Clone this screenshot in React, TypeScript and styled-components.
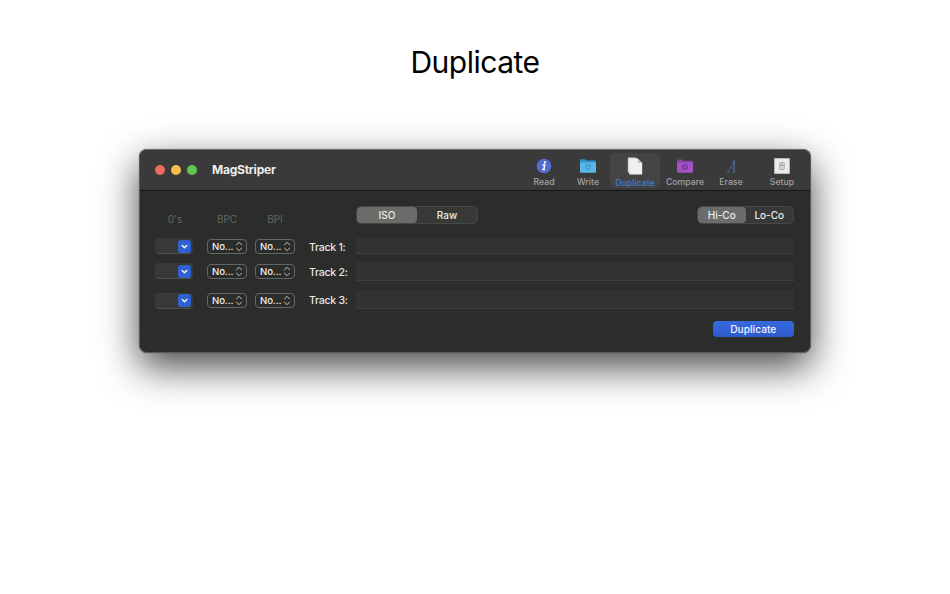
import React from "react";
import styled, { createGlobalStyle } from "styled-components";

const GlobalStyle = createGlobalStyle`
  * { box-sizing: border-box; }
  body { margin: 0; background: #fff; font-family: Inter, "Liberation Sans", sans-serif; }
`;

const Page = styled.main`
  height: 594px;
  overflow: hidden;
  display: flex;
  flex-direction: column;
  align-items: center;
`;

const Heading = styled.h1`
  margin: 42px 0 67px;
  height: 40px;
  line-height: 40px;
  font-size: 30px;
  font-weight: 400;
  letter-spacing: -0.5px;
  color: #000;
`;

const Window = styled.section`
  width: 672px;
  height: 204px;
  border: 1px solid #5b5b5b;
  border-top-color: #6c6c6c;
  border-radius: 8px;
  overflow: hidden;
  background: #2b2d2a;
  box-shadow: 0 0 1px rgba(0, 0, 0, 0.6), 0 14px 38px rgba(0, 0, 0, 0.72);
`;

const TitleBar = styled.header`
  height: 41px;
  padding: 0 7px 0 15.3px;
  display: flex;
  align-items: flex-start;
  background: #3a3a3a;
  border-bottom: 1px solid #161616;
`;

const Lights = styled.div`
  height: 40px;
  width: 56.7px;
  display: flex;
  align-items: center;
  gap: 6px;
`;

const Light = styled.span<{ $color: string }>`
  width: 10px;
  height: 10px;
  border-radius: 50%;
  background: ${(p) => p.$color};
`;

const Title = styled.div`
  flex: 1;
  line-height: 40px;
  font-size: 12px;
  font-weight: 700;
  letter-spacing: -0.22px;
  color: #ededed;
`;

const Tool = styled.button<{ $width: number; $active?: boolean; $gap?: number }>`
  width: ${(p) => p.$width}px;
  height: 35px;
  margin: 3px 0 0 ${(p) => p.$gap ?? 0}px;
  padding: 4px 0 0;
  border: 0;
  border-radius: 5px;
  display: flex;
  flex-direction: column;
  align-items: center;
  justify-content: flex-start;
  gap: 2px;
  font: 500 8.7px/12px Inter, sans-serif;
  letter-spacing: 0.02px;
  white-space: nowrap;
  background: ${(p) => (p.$active ? "#444444" : "transparent")};
  color: ${(p) => (p.$active ? "#3b7bdc" : "#a2a2a2")};
`;

const IconSlot = styled.span`
  height: 18px;
  display: flex;
  align-items: center;
  svg { display: block; }
`;

const Body = styled.div`
  padding: 15px 16px 0 15px;
`;

const HeadRow = styled.div`
  height: 32px;
  display: flex;
  align-items: flex-start;
`;

const ColumnLabel = styled.span<{ $width: number; $gap: number }>`
  width: ${(p) => p.$width}px;
  margin-right: ${(p) => p.$gap}px;
  padding-top: 7px;
  text-align: center;
  font-size: 10px;
  line-height: 13px;
  color: #656764;
`;

const Segmented = styled.div<{ $push?: boolean }>`
  height: 18px;
  display: flex;
  margin-left: ${(p) => (p.$push ? "auto" : "61px")};
  border: 1px solid #464845;
  border-radius: 5px;
  background: #373936;
`;

const Segment = styled.button<{ $width: number; $on?: boolean }>`
  width: ${(p) => p.$width}px;
  height: 16px;
  padding: 0;
  border: 0;
  border-radius: 4px;
  background: ${(p) => (p.$on ? "#6a6c69" : "transparent")};
  color: #ececec;
  font: 500 10px/16px Inter, sans-serif;
`;

const TrackRow = styled.div<{ $height: number }>`
  height: ${(p) => p.$height}px;
  display: flex;
  align-items: flex-start;
`;

const Combo = styled.div<{ $top: number }>`
  width: 38px;
  height: 16px;
  margin: ${(p) => p.$top}px 14px 0 0;
  padding: 0.5px 0.6px 0 0;
  display: flex;
  justify-content: flex-end;
  border: 1px solid #393b38;
  border-bottom-color: #4d4f4c;
  border-radius: 4px;
  background: #373936;
`;

const ComboButton = styled.span`
  width: 13px;
  height: 13px;
  border-radius: 3px;
  background: #2f62d0;
  svg { display: block; }
`;

const Popup = styled.button<{ $top: number; $gap: number }>`
  width: 40px;
  height: 15px;
  margin: ${(p) => p.$top}px ${(p) => p.$gap}px 0 0;
  padding: 0 3px 0 4px;
  display: flex;
  align-items: center;
  justify-content: space-between;
  border: 1px solid #656764;
  border-radius: 4px;
  background: transparent;
  color: #f0f0f0;
  font: 500 9.6px/13px Inter, sans-serif;
  letter-spacing: -0.1px;
`;

const TrackLabel = styled.label<{ $top: number }>`
  width: 47px;
  margin-top: ${(p) => p.$top}px;
  line-height: 14px;
  font-size: 10.6px;
  font-weight: 500;
  letter-spacing: -0.3px;
  white-space: nowrap;
  color: #e6e6e6;
`;

const Field = styled.div<{ $top: number; $height: number }>`
  flex: 1;
  height: ${(p) => p.$height}px;
  margin-top: ${(p) => p.$top}px;
  background: #313330;
  border-bottom: 1px solid #3d3f3c;
`;

const Footer = styled.div`
  display: flex;
  justify-content: flex-end;
`;

const Primary = styled.button`
  width: 81.5px;
  height: 16px;
  padding: 0;
  border: 0;
  border-radius: 4px;
  background: linear-gradient(#376ade, #2d5bcc);
  color: #eef3ff;
  font: 500 10.2px/16px Inter, sans-serif;
`;

const InfoIcon = () => (
  <svg width="16" height="16" viewBox="0 0 16 16">
    <circle cx="8" cy="8" r="7.3" fill="#536ace" />
    <circle cx="8.9" cy="4.4" r="1.15" fill="#fff" />
    <path d="M6.4 7h2.4L7.7 11.5M6 11.5h3" fill="none" stroke="#fff" strokeWidth="1.4" />
  </svg>
);

const WriteIcon = () => (
  <svg width="18" height="16" viewBox="0 0 18 16">
    <path d="M1 2.4Q1 1.2 2.2 1.2h3.6l1.5 1.4h8.3Q16.9 2.6 16.9 4v2H1z" fill="#3695c8" />
    <path d="M1 4.4h16v9q0 1.3-1.3 1.3H2.3Q1 14.7 1 13.4z" fill="#58b7e6" />
    <circle cx="9" cy="9.2" r="2.6" fill="none" stroke="#378fbe" strokeWidth=".7" />
    <path d="M6.7 7.4h1.5M9.8 7.4h1.5M8 10h2" stroke="#2b83b5" strokeWidth=".9" />
  </svg>
);

const DuplicateIcon = () => (
  <svg width="18" height="18" viewBox="0 0 18 18">
    <path d="M1.8.5h7.8l2.6 2.6v12.4H1.8z" fill="#d4d4d4" />
    <path d="M3.3 1.5h8.5l4.4 4.4v11.5H3.3z" fill="#f0f0f0" />
    <path d="M11.8 1.5v4.4h4.4z" fill="#c2c2c2" />
  </svg>
);

const CompareIcon = () => (
  <svg width="18" height="16" viewBox="0 0 18 16">
    <path d="M1 2.7q0-1.2 1.2-1.2h3.6l1.5 1.3h8.3q1.3 0 1.3 1.4v2H1z" fill="#8742a8" />
    <path d="M1 4.6h16v8.9q0 1.3-1.3 1.3H2.3Q1 14.8 1 13.5z" fill="#a253c5" />
    <circle cx="9" cy="8.8" r="2.3" fill="none" stroke="#713090" strokeWidth="1.1" />
    <circle cx="9" cy="8.8" r=".6" fill="#713090" />
  </svg>
);

const EraseIcon = () => (
  <svg width="16" height="16" viewBox="0 0 16 16">
    <g fill="none" stroke="#48669a">
      <path d="M4.9 14.3 11.3 2.4" strokeWidth=".9" />
      <path d="m11.2 2.4-.4 11.7" strokeWidth="1.6" />
      <path d="M7.1 10H11M3.8 14.3h2.6M9.2 14.3h3.2" strokeWidth=".8" />
    </g>
  </svg>
);

const SetupIcon = () => (
  <svg width="16" height="16" viewBox="0 0 16 16">
    <path d="M.3.3h15.4v15.4H.3z" fill="#e9eaec" />
    <rect x="5.8" y="4.5" width="4.4" height="7" rx=".8" fill="#dcdedf" stroke="#a0a2a4" />
    <path d="M7 6h2v2.2H7z" fill="#9fa1a3" />
  </svg>
);

const ChevronDown = () => (
  <svg width="13" height="13" viewBox="0 0 13 13">
    <path d="m4.2 5.5 2.3 2.2 2.3-2.2" fill="none" stroke="#fff" strokeWidth="1.3" strokeLinecap="round" strokeLinejoin="round" />
  </svg>
);

const UpDown = () => (
  <svg width="8" height="11" viewBox="0 0 8 11">
    <path d="M1.5 3.8 4 1.3l2.5 2.5M1.5 7.2 4 9.7l2.5-2.5" fill="none" stroke="#c4c5c3" strokeWidth="1" strokeLinecap="round" strokeLinejoin="round" />
  </svg>
);

const tools = [
  { name: "Read", width: 44, icon: <InfoIcon /> },
  { name: "Write", width: 44, icon: <WriteIcon /> },
  { name: "Duplicate", width: 50, icon: <DuplicateIcon />, active: true },
  { name: "Compare", width: 50, icon: <CompareIcon /> },
  { name: "Erase", width: 42, icon: <EraseIcon /> },
  { name: "Setup", width: 42, icon: <SetupIcon />, gap: 9 },
];

const tracks = [
  { id: 1, height: 24, combo: 0, popup: 1, label: 3, field: 0, fieldHeight: 15.5 },
  { id: 2, height: 28, combo: 1, popup: 2, label: 4, field: 0, fieldHeight: 19 },
  { id: 3, height: 31, combo: 2.5, popup: 3, label: 4, field: 0, fieldHeight: 19 },
];

export default function App() {
  return (
    <>
      <GlobalStyle />
      <Page>
        <Heading>Duplicate</Heading>
        <Window>
          <TitleBar>
            <Lights>
              <Light $color="#ed6a5f" />
              <Light $color="#f5bf4f" />
              <Light $color="#61c554" />
            </Lights>
            <Title>MagStriper</Title>
            {tools.map((t) => (
              <Tool key={t.name} $width={t.width} $active={t.active} $gap={t.gap}>
                <IconSlot>{t.icon}</IconSlot>
                <span>{t.name}</span>
              </Tool>
            ))}
          </TitleBar>
          <Body>
            <HeadRow>
              <ColumnLabel $width={40} $gap={12}>0's</ColumnLabel>
              <ColumnLabel $width={40} $gap={8}>BPC</ColumnLabel>
              <ColumnLabel $width={40} $gap={0}>BPI</ColumnLabel>
              <Segmented>
                <Segment $width={60} $on>ISO</Segment>
                <Segment $width={60}>Raw</Segment>
              </Segmented>
              <Segmented $push>
                <Segment $width={47.5} $on>Hi-Co</Segment>
                <Segment $width={47.5}>Lo-Co</Segment>
              </Segmented>
            </HeadRow>
            {tracks.map((t) => (
              <TrackRow key={t.id} $height={t.height}>
                <Combo $top={t.combo}>
                  <ComboButton><ChevronDown /></ComboButton>
                </Combo>
                <Popup $top={t.popup} $gap={8}>No...<UpDown /></Popup>
                <Popup $top={t.popup} $gap={14}>No...<UpDown /></Popup>
                <TrackLabel $top={t.label}>Track {t.id}:</TrackLabel>
                <Field $top={t.field} $height={t.fieldHeight} />
              </TrackRow>
            ))}
            <Footer>
              <Primary>Duplicate</Primary>
            </Footer>
          </Body>
        </Window>
      </Page>
    </>
  );
}
